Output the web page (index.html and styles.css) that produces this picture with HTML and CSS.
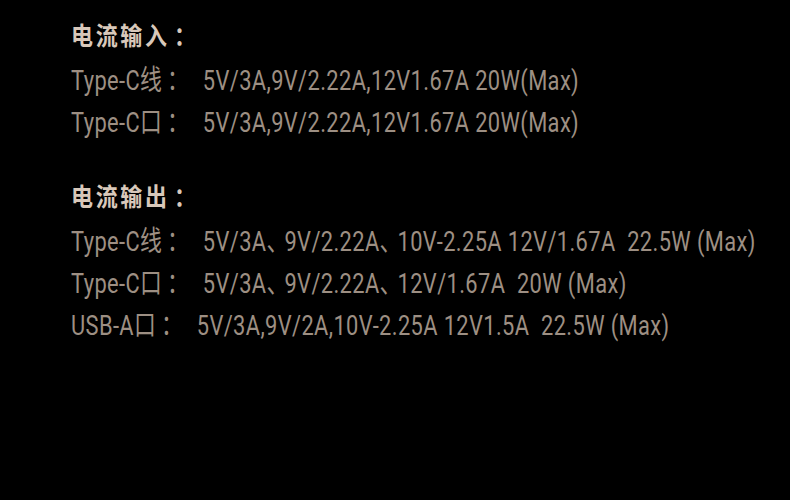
FILE: index.html
```html
<!DOCTYPE html>
<html lang="zh">
<head>
<meta charset="utf-8">
<link rel="stylesheet" href="styles.css">
</head>
<body>
<main class="spec">
  <section class="group">
    <h2 class="title"><span class="ttxt">电流输入<span class="colon">：</span></span></h2>
    <p class="row"><span class="txt">Type-C线<span class="colon">：</span> 5V/3A,9V/2.22A,12V1.67A 20W(Max)</span></p>
    <p class="row"><span class="txt">Type-C口<span class="colon">：</span> 5V/3A,9V/2.22A,12V1.67A 20W(Max)</span></p>
  </section>
  <section class="group">
    <h2 class="title"><span class="ttxt">电流输出<span class="colon">：</span></span></h2>
    <p class="row"><span class="txt">Type-C线<span class="colon">：</span> 5V/3A<span class="dun">、</span>9V/2.22A<span class="dun">、</span>10V-2.25A 12V/1.67A&nbsp; 22.5W (Max)</span></p>
    <p class="row"><span class="txt">Type-C口<span class="colon">：</span> 5V/3A<span class="dun">、</span>9V/2.22A<span class="dun">、</span>12V/1.67A&nbsp; 20W (Max)</span></p>
    <p class="row"><span class="txt">USB-A口<span class="colon">：</span> 5V/3A,9V/2A,10V-2.25A 12V1.5A&nbsp; 22.5W (Max)</span></p>
  </section>
</main>
</body>
</html>
```
FILE: styles.css
```css
html, body {
  margin: 0;
  padding: 0;
  background: #000;
  width: 790px;
  height: 500px;
  overflow: hidden;
}
.spec {
  padding: 11px 0 0 71px;
  display: flex;
  flex-direction: column;
  gap: 31px;
}
.group {
  display: flex;
  flex-direction: column;
}
.title {
  margin: 0;
  height: 46px;
  line-height: 46px;
  font-family: "Noto Sans CJK SC", sans-serif;
  font-size: 25px;
  font-weight: 700;
  letter-spacing: 3px;
  color: #d8c8ba;
  white-space: nowrap;
}
.ttxt {
  display: inline-block;
  transform: scaleX(0.88);
  transform-origin: left center;
}
.colon {
  font-family: "Noto Sans CJK TC", sans-serif;
}
.title .colon {
  padding-left: 5px;
}
.row .colon {
  padding: 0 10px 0 6px;
}
.dun {
  letter-spacing: -5px;
}
.row {
  margin: 0;
  height: 42px;
  line-height: 42px;
  font-family: Roboto, "Noto Sans CJK SC", sans-serif;
  font-size: 28px;
  letter-spacing: 0.5px;
  color: #9d8f83;
  white-space: nowrap;
  overflow: hidden;
}
.txt {
  display: inline-block;
  transform: scaleX(0.78);
  transform-origin: left center;
}
```
